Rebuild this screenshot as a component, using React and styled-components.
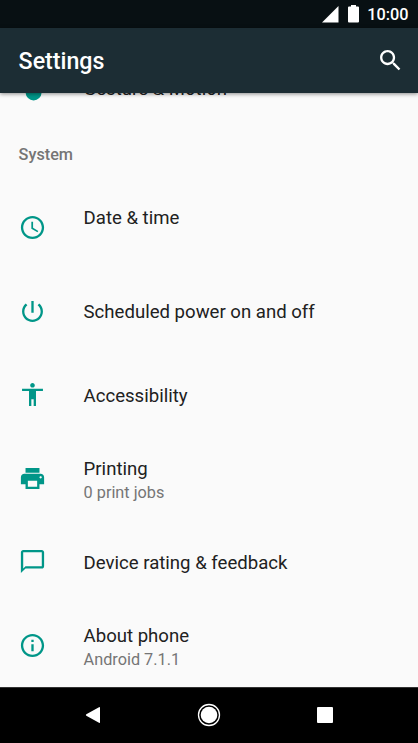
import React from "react";
import styled, { createGlobalStyle } from "styled-components";

const GlobalStyle = createGlobalStyle`
  * { box-sizing: border-box; }
  body { margin: 0; background: #000; overflow: hidden; }
`;

const Screen = styled.div`
  display: flex;
  flex-direction: column;
  width: 418px;
  height: 743px;
  overflow: hidden;
  background: #fafafa;
  color: #212121;
  font-family: Roboto, sans-serif;
`;

const StatusBar = styled.div`
  display: flex;
  flex: none;
  align-items: center;
  justify-content: flex-end;
  height: 28px;
  padding-right: 9.6px;
  background: #081013;
  color: #fff;
`;

const SignalIcon = styled.svg`
  width: 17px;
  height: 17px;
  margin-right: 9px;
`;

const BatteryIcon = styled.svg`
  width: 11px;
  height: 18px;
  margin-right: 8.2px;
`;

const Clock = styled.span`
  font-size: 16.26px;
  font-weight: 500;
  line-height: 28px;
  padding-top: 1px;
`;

const AppBar = styled.header`
  display: flex;
  flex: none;
  align-items: center;
  justify-content: space-between;
  height: 65px;
  padding: 0 13px 0 18.6px;
  background: #1c2d34;
  box-shadow: 0 1px 4px rgba(0, 0, 0, 0.45);
  color: #fff;
  z-index: 1;
`;

const Title = styled.h1`
  margin: 0;
  font-size: 23.2px;
  font-weight: 500;
  line-height: 28px;
`;

const Icon = styled.svg`
  flex: none;
  width: 29px;
  height: 29px;
  fill: ${(p) => p.$color || "#009688"};
`;

const Content = styled.main`
  display: flex;
  flex: 1;
  flex-direction: column;
  min-height: 0;
  overflow: hidden;
`;

const Row = styled.div`
  display: flex;
  flex: none;
  align-items: center;
  height: 83.6px;
  padding-left: 18px;
  margin-top: ${(p) => (p.$scrolled ? "-46.3px" : "0")};
`;

const Labels = styled.div`
  display: flex;
  flex-direction: column;
  margin-left: 36.6px;
  padding-top: ${(p) => (p.$twoLine ? "4.6px" : p.$scrolled ? "1px" : "3px")};
`;

const Label = styled.span`
  font-size: 18.58px;
  line-height: 25px;
  white-space: nowrap;
`;

const Summary = styled.span`
  height: 22px;
  color: #757575;
  font-size: 16.26px;
  line-height: 22px;
`;

const SectionTitle = styled.h2`
  flex: none;
  height: 55.4px;
  margin: 0;
  padding: 14px 0 0 18.6px;
  color: #757575;
  font-size: 16.26px;
  font-weight: 500;
  line-height: 22px;
`;

const NavBar = styled.nav`
  display: flex;
  flex: none;
  align-items: center;
  justify-content: space-between;
  height: 56px;
  padding: 0 79px 2px;
  border-top: 1px solid #333;
  background: #000;
`;

const NavIcon = styled.svg`
  width: 28px;
  height: 28px;
  fill: #fff;
`;

const ICON_BOX = "-0.49 -0.49 24.98 24.98";

const items = [
  {
    label: "Date & time",
    summary: "",
    path: "M11.99 2C6.47 2 2 6.48 2 12s4.47 10 9.99 10C17.52 22 22 17.52 22 12S17.52 2 11.99 2zM12 20c-4.42 0-8-3.58-8-8s3.58-8 8-8 8 3.58 8 8-3.58 8-8 8zM12.5 7H11v6l5.25 3.15.75-1.23-4.5-2.67z",
  },
  {
    label: "Scheduled power on and off",
    path: "M13 3h-2v10h2V3zm4.83 2.17l-1.42 1.42C17.99 7.86 19 9.81 19 12c0 3.87-3.13 7-7 7s-7-3.13-7-7c0-2.19 1.01-4.14 2.58-5.42L6.17 5.17C4.23 6.82 3 9.26 3 12c0 4.97 4.03 9 9 9s9-4.03 9-9c0-2.74-1.23-5.18-3.17-6.83z",
  },
  {
    label: "Accessibility",
    path: "M12 2c1.1 0 2 .9 2 2s-.9 2-2 2-2-.9-2-2 .9-2 2-2zm9 7h-6v13h-2v-6h-2v6H9V9H3V7h18v2z",
  },
  {
    label: "Printing",
    summary: "0 print jobs",
    path: "M19 8H5c-1.66 0-3 1.34-3 3v6h4v4h12v-4h4v-6c0-1.66-1.34-3-3-3zm-3 11H8v-5h8v5zm3-7c-.55 0-1-.45-1-1s.45-1 1-1 1 .45 1 1-.45 1-1 1zm-1-9H6v4h12V3z",
  },
  {
    label: "Device rating & feedback",
    path: "M20 2H4c-1.1 0-2 .9-2 2v18l4-4h14c1.1 0 2-.9 2-2V4c0-1.1-.9-2-2-2zm0 14H6l-2 2V4h16v12z",
  },
  {
    label: "About phone",
    summary: "Android 7.1.1",
    path: "M11 17h2v-6h-2v6zm1-15C6.48 2 2 6.48 2 12s4.48 10 10 10 10-4.48 10-10S17.52 2 12 2zm0 18c-4.41 0-8-3.59-8-8s3.59-8 8-8 8 3.59 8 8-3.59 8-8 8zM11 9h2V7h-2v2z",
  },
];

const gesturePath =
  "M9.5 10V4a3.2 3.2 0 0 1 6.4 0v6c2.3 1 3.9 3 3.9 5.4a6.85 6.85 0 0 1-13.7 0c0-2.3 1.2-4.4 3.4-5.4z";

function SettingsRow({ label, summary, path, scrolled }) {
  const twoLine = summary !== undefined;
  return (
    <Row $scrolled={scrolled}>
      <Icon viewBox={ICON_BOX}>
        <path d={path} />
      </Icon>
      <Labels $scrolled={scrolled} $twoLine={twoLine}>
        <Label>{label}</Label>
        {twoLine && <Summary>{summary}</Summary>}
      </Labels>
    </Row>
  );
}

export default function App() {
  return (
    <>
      <GlobalStyle />
      <Screen>
        <StatusBar>
          <SignalIcon viewBox="0 0 17 17" fill="#fff">
            <path d="M0 16.5 16.5 0v16.5z" />
          </SignalIcon>
          <BatteryIcon viewBox="0 0 11 18" fill="#fff">
            <path d="M3 0h5v1.5h2q1 0 1 1v14q0 1-1 1H1q-1 0-1-1v-14q0-1 1-1h2z" />
          </BatteryIcon>
          <Clock>10:00</Clock>
        </StatusBar>
        <AppBar>
          <Title>Settings</Title>
          <Icon viewBox={ICON_BOX} $color="#fff">
            <path d="M15.5 14h-.79l-.28-.27C15.41 12.59 16 11.11 16 9.5 16 5.91 13.09 3 9.5 3S3 5.91 3 9.5 5.91 16 9.5 16c1.61 0 3.09-.59 4.23-1.57l.27.28v.79l5 4.99L20.49 19l-4.99-5zm-6 0C7.01 14 5 11.99 5 9.5S7.01 5 9.5 5 14 7.01 14 9.5 11.99 14 9.5 14z" />
          </Icon>
        </AppBar>
        <Content>
          <SettingsRow label="Gesture & Motion" path={gesturePath} scrolled />
          <SectionTitle>System</SectionTitle>
          {items.map((item) => (
            <SettingsRow key={item.label} {...item} />
          ))}
        </Content>
        <NavBar>
          <NavIcon viewBox="0 0 28 28">
            <path d="M7.3 13.2 20 6.2q1-.5 1 .5v14.6q0 1-1 .5L7.3 14.8q-1-.8 0-1.6z" />
          </NavIcon>
          <NavIcon viewBox="0 0 28 28">
            <circle cx="14" cy="14" r="10.5" fill="none" stroke="#fff" strokeWidth="1.3" />
            <circle cx="14" cy="14" r="8.3" />
          </NavIcon>
          <NavIcon viewBox="0 0 28 28">
            <rect x="6" y="6" width="16" height="16" rx="1" />
          </NavIcon>
        </NavBar>
      </Screen>
    </>
  );
}
